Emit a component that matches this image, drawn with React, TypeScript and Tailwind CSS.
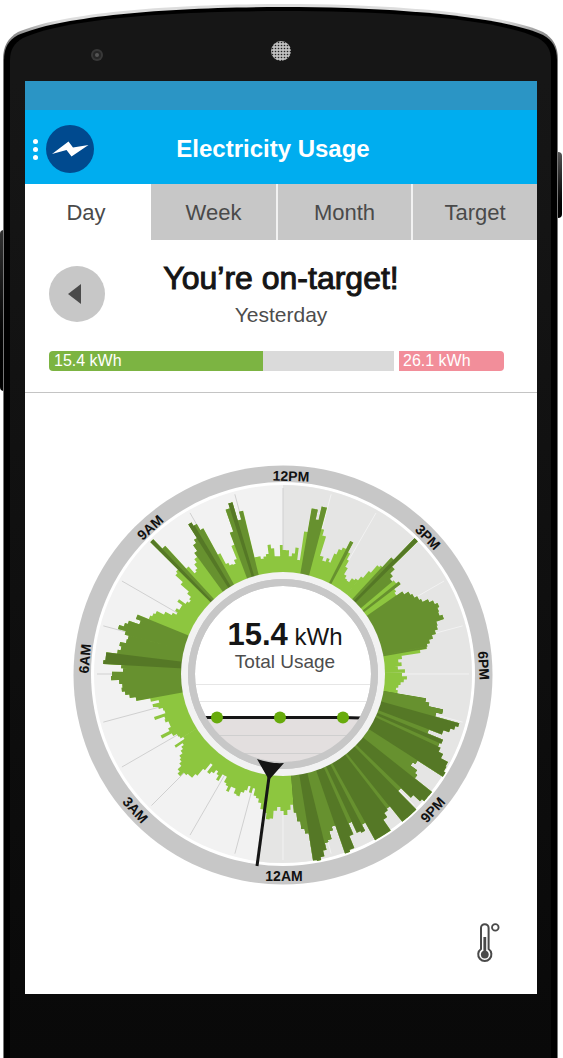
import { useState } from 'react'
import type { ReactNode } from 'react'
import clsx from 'clsx'

const TABS = ['Day', 'Week', 'Month', 'Target']

// [angle, reach] for each reading. Angles run clockwise from noon, in degrees.
const READINGS: [number, number][] = [
  [0.4, 124], [2, 124], [3.5, 118], [5, 121], [6.3, 127], [7.8, 115], [9.1, 144], [10.5, 168], [11.4, 168],
  [12.4, 158], [13.6, 172], [14.5, 172], [15.1, 150], [16.6, 144], [18.1, 124], [20, 120], [21.5, 124], [22.6, 121],
  [23.5, 131], [24.6, 137], [26, 140], [27.5, 149], [28.7, 138], [29.6, 131], [30.7, 124], [32.2, 117], [33.5, 114],
  [35, 113], [36.5, 118], [38, 120], [39.3, 125], [40.3, 134], [41.5, 144], [42.4, 146], [43.4, 159], [44.8, 189],
  [46.1, 153], [47.5, 147], [49, 143], [50.6, 145], [52, 148], [53.2, 140], [54.6, 138], [56, 145], [57.4, 150],
  [59, 152], [60.8, 155], [62.2, 157], [63.2, 163], [64.6, 167], [66, 170], [67.5, 168], [68.8, 167], [70.4, 170],
  [71.8, 162], [73.2, 161], [74.6, 158], [76, 154], [77.4, 150], [78.8, 147], [79.6, 146], [80.5, 139], [82, 120],
  [83.5, 116], [85.2, 119], [87, 115], [88.6, 122], [90.2, 119], [91.8, 124], [93.2, 121], [94.5, 118], [96, 116],
  [97.4, 114], [98.8, 116], [100.4, 145], [101.8, 149], [103.2, 164], [105, 158], [106.2, 183], [107.4, 180],
  [108.6, 176], [110, 170], [111.6, 156], [113, 173], [114.4, 171], [115.8, 174], [117.3, 179], [118.8, 187],
  [120.4, 188], [122, 190], [123.4, 160], [125, 157], [126.3, 165], [127.6, 168], [129.1, 190], [130.3, 190],
  [131.5, 190], [132.4, 187], [133.3, 178], [134.7, 164], [136.2, 190], [138, 190], [140.4, 190], [141.7, 170],
  [143.2, 172], [144.7, 177], [146.2, 190], [148, 190], [150.2, 190], [151.7, 170], [153, 177], [154.4, 175],
  [155.6, 163], [157, 175], [158.4, 188], [160.2, 190], [161.6, 160], [163, 164], [164.2, 172], [165.6, 174],
  [166.6, 181], [167.8, 187], [169, 190], [170.2, 189], [171.4, 161], [172.6, 156], [173.8, 148], [175, 139],
  [176.2, 131], [177.4, 136], [179, 141], [180.4, 137], [181.7, 133], [183.3, 137], [184.6, 145], [186, 146],
  [187.4, 140], [188.8, 137], [190.2, 131], [191.6, 127], [193, 125], [194.2, 118], [195.4, 123], [196.7, 117],
  [197.6, 122], [198.9, 125], [200.4, 130], [201.8, 129], [203, 124], [204.2, 124], [205.3, 130], [206.6, 125],
  [208, 123], [209.2, 117], [210.4, 117], [211.7, 125], [213, 120], [214.2, 117], [215.5, 121], [217, 124],
  [218.4, 115], [219.6, 124], [220.6, 133], [221.8, 138], [223, 138], [224.4, 140], [226, 145], [227.2, 142],
  [228.5, 137], [229.8, 134], [231, 132], [232.4, 128], [233.8, 125], [235, 122], [236, 130], [237.1, 118],
  [238.4, 121], [239.8, 122], [241.2, 126], [242.6, 137], [244, 127], [245.4, 124], [246.8, 124], [248.2, 127],
  [249.6, 126], [250.8, 136], [252.2, 124], [253.6, 125], [255, 129], [256.3, 134], [257.5, 127], [258.8, 135],
  [260.4, 149], [261.8, 155], [263, 159], [264.4, 162], [265.8, 161], [267.2, 164], [268.6, 172], [270, 171],
  [271.4, 160], [272.6, 162], [273.7, 180], [275, 178], [276.3, 178], [277.6, 167], [279, 164], [280.4, 166],
  [281.8, 160], [283.2, 159], [284.6, 163], [286, 171], [287.2, 166], [288.4, 163], [289.6, 152], [291.4, 157],
  [293, 145], [294.4, 143], [295.8, 141], [297.2, 133], [298.4, 126], [299.6, 122], [301, 125], [302.4, 122],
  [303.7, 122], [305, 128], [306.3, 120], [307.8, 118], [309.3, 120], [310.6, 125], [311.8, 136], [313.2, 146],
  [314.2, 148], [315.4, 187], [316.7, 174], [318.1, 143], [319.2, 134], [320.4, 136], [321.6, 141], [323, 145],
  [324.4, 150], [325.8, 157], [327.1, 161], [328.2, 177], [329.4, 173], [330.7, 166], [331.9, 136], [333.1, 124],
  [334.5, 121], [336, 120], [337.4, 124], [338.7, 138], [340, 151], [341.5, 174], [342.9, 179], [344.2, 160],
  [345.5, 168], [347, 120], [348.4, 120], [349.8, 117], [351.2, 119], [352.5, 121], [353.8, 130], [355.2, 126],
  [356.6, 118], [358, 118], [359.2, 129],
]

const LIME = '#8dc63f'
const OLIVE = '#67912f'
const MOSS = '#557826'

// Heavier use is drawn over the lime base, [from, to, colour]
const BANDS: [number, number, string][] = [
  [9.8, 14.8, OLIVE], [26.8, 28.2, OLIVE], [42.8, 49.8, OLIVE], [44, 45.4, MOSS], [51.4, 52.6, OLIVE],
  [55.2, 80, OLIVE], [99.6, 175.4, MOSS], [99.6, 105.6, OLIVE], [110.8, 112.4, OLIVE], [113.8, 115, OLIVE],
  [122.7, 128.4, OLIVE], [134, 135.4, OLIVE], [141.2, 142.4, OLIVE], [151, 152.4, OLIVE], [155, 156.4, OLIVE],
  [161, 166.2, OLIVE], [170.8, 175.4, OLIVE], [259.6, 292.2, OLIVE], [273.2, 277, MOSS], [314.8, 317.4, OLIVE],
  [314.8, 316, MOSS], [323.8, 331.3, OLIVE], [327.6, 329.2, MOSS], [339.4, 346.2, OLIVE], [342.2, 343.6, MOSS],
]

const HOURS = [
  { label: '12PM', at: 2, turn: 2 },
  { label: '3PM', at: 46, turn: 46 },
  { label: '6PM', at: 87, turn: 87 },
  { label: '9PM', at: 132, turn: -48 },
  { label: '12AM', at: 180, turn: 0 },
  { label: '3AM', at: 228, turn: 48 },
  { label: '6AM', at: 275, turn: -85 },
  { label: '9AM', at: 318, turn: -42 },
]

const SPOKES = Array.from({ length: 24 }, (_, i) => i * 15)

function polar(angle: number, r: number) {
  const a = (angle * Math.PI) / 180
  return [+(r * Math.sin(a)).toFixed(2), +(-r * Math.cos(a)).toFixed(2)]
}

function wedge(from: number, to: number, r: number) {
  const large = to - from > 180 ? 1 : 0
  return `M0 0L${polar(from, r)}A${r} ${r} 0 ${large} 1 ${polar(to, r)}Z`
}

// Stepped outline: each reading reaches halfway to its neighbours
function outline() {
  const n = READINGS.length
  return READINGS.map(([angle, r], i) => {
    const prev = i === 0 ? READINGS[n - 1][0] - 360 : READINGS[i - 1][0]
    const next = i === n - 1 ? READINGS[0][0] + 360 : READINGS[i + 1][0]
    return wedge((prev + angle) / 2, (angle + next) / 2 + 0.05, r)
  }).join('')
}

function UsageDial() {
  return (
    <svg
      viewBox="-210 -210 420 422"
      className="w-[420px] max-w-full font-['Liberation_Sans',Arial,sans-serif]"
      role="img"
      aria-label="Electricity usage by hour"
    >
      <defs>
        <clipPath id="usage">
          <path d={outline()} />
        </clipPath>
        <clipPath id="core">
          <circle r="89" />
        </clipPath>
      </defs>

      <circle cy="1" r="209.5" fill="#c7c7c7" />
      <circle r="192" fill="#fff" />
      <circle r="189" fill="#f2f2f2" />
      <path d={wedge(0, 188, 189)} fill="#e5e5e4" />
      {SPOKES.map((angle) => {
        const [x, y] = polar(angle, 186)
        return <line key={angle} x2={x} y2={y} stroke={angle > 0 && angle < 188 ? '#f2f2f2' : '#d0d0d0'} />
      })}

      <g clipPath="url(#usage)">
        <circle r="191" fill={LIME} />
        {BANDS.map(([from, to, fill]) => (
          <path key={`${from}-${to}`} d={wedge(from, to, 192)} fill={fill} />
        ))}
      </g>

      <g transform="translate(1 2)">
        {HOURS.map(({ label, at, turn }) => {
          const [x, y] = polar(at, 200)
          return (
            <text
              key={label}
              transform={`translate(${x} ${y}) rotate(${turn})`}
              y="5"
              textAnchor="middle"
              className="fill-[#111] text-[14px] font-bold"
            >
              {label}
            </text>
          )
        })}
      </g>

      <circle r="102" fill="#f2f2f2" />
      <circle r="95" fill="#c7c7c7" />
      <circle r="88" fill="#fff" />
      <g clipPath="url(#core)">
        <rect x="-90" y="44" width="180" height="50" fill="#e3dfdf" />
        <path d="M-88 10.5H88M-84 27.5H84" stroke="#e6e6e6" />
        <path d="M-68 61.5H68M-50 79.5H50" stroke="#cfcfcf" />
        <path d="M-78 43.5H60L78 44" stroke="#151515" strokeWidth="3" fill="none" />
      </g>
      <circle r="91.5" fill="none" stroke="#c7c7c7" strokeWidth="7" />
      <circle cx="-66" cy="43.5" r="6" fill="#68ab0c" />
      <circle cx="-3" cy="43.5" r="6" fill="#68ab0c" />
      <circle cx="60" cy="43.5" r="6" fill="#68ab0c" />

      <text x="2" y="-29" textAnchor="middle" className="fill-[#151515]">
        <tspan className="text-[31px] font-bold">15.4</tspan>
        <tspan className="text-[24px]"> kWh</tspan>
      </text>
      <text x="2" y="-6" textAnchor="middle" className="fill-[#4d4d4d] text-[19px]">
        Total Usage
      </text>

      <path d="M-14 103L-26 192" stroke="#151515" strokeWidth="3" />
      <path d="M-26 85Q-12 90 1 89L-14 106Z" fill="#151515" />
    </svg>
  )
}

function Thermometer() {
  return (
    <svg width="26" height="42" viewBox="0 0 26 42" fill="none" stroke="#4a4a4a" strokeWidth="2">
      <path d="M5 27V6a3.800 3.800 0 0 1 7.600 0V27a6.600 6.600 0 1 1-7.600 0Z" />
      <circle cx="8.8" cy="32.6" r="3.9" fill="#4a4a4a" stroke="none" />
      <path d="M8.8 15v16" strokeWidth="2.8" />
      <circle cx="19.3" cy="5.4" r="3.3" strokeWidth="1.8" />
    </svg>
  )
}

function Phone({ children }: { children: ReactNode }) {
  return (
    <div className="relative flex min-h-screen flex-col overflow-hidden bg-white pl-[3px] pr-[5px]">
      <div className="absolute left-0 top-[230px] h-[161px] w-[4px] rounded-l-sm bg-linear-to-b from-[#333] to-black" />
      <div className="absolute right-px top-[152px] h-[66px] w-[5px] rounded-r-sm bg-linear-to-b from-[#555] to-black" />

      <div className="relative flex h-[81px] justify-center">
        <svg className="absolute inset-0 size-full" viewBox="0 0 555 81" preserveAspectRatio="none">
          <defs>
            <linearGradient id="rim">
              <stop offset="0" stopColor="#777" />
              <stop offset="0.1" stopColor="#ddd" />
              <stop offset="0.9" stopColor="#ddd" />
              <stop offset="1" stopColor="#777" />
            </linearGradient>
          </defs>
          <path d="M0 81V60C0 46 5 38 15 32C58 13 165 4 278 4S497 13 540 32C550 38 555 46 555 60V81Z" fill="url(#rim)" />
          <path d="M1 81V60C1 47 6 40 15 35C58 16 165 7 278 7S497 16 540 35C549 40 554 47 554 60V81Z" fill="#000" />
          <path d="M7 81V60C7 50 11 43 20 38C60 19 165 11 278 11S495 19 535 38C544 43 548 50 548 60V81Z" fill="#161616" />
          <circle cx="94" cy="55" r="6" fill="#383838" />
          <circle cx="94" cy="55" r="4" fill="#262626" />
          <circle cx="94" cy="55" r="2" fill="#555" />
        </svg>
        <svg className="relative mt-[41px] size-5" viewBox="0 0 20 20">
          <defs>
            <pattern id="mesh" width="3" height="3" patternUnits="userSpaceOnUse">
              <rect width="3" height="3" fill="#bdbdbd" />
              <circle cx="1.5" cy="1.5" r="0.8" fill="#222" />
            </pattern>
          </defs>
          <circle cx="10" cy="10" r="10" fill="url(#mesh)" />
        </svg>
      </div>

      <div className="relative flex-1 border-x border-[#777] bg-black px-[6px]">
        <div className="h-full bg-linear-to-b from-[#161616] to-[#090909] pb-16 pl-[15px] pr-[14px]">{children}</div>
      </div>
    </div>
  )
}

export default function App() {
  const [tab, setTab] = useState('Day')

  return (
    <Phone>
      <div className="bg-white font-['Liberation_Sans',Arial,sans-serif]">
        <div className="h-[29px] bg-[#2b95c5]" />

        <header className="flex h-[74px] items-center bg-[#00adef] pt-1 pl-2 text-white">
          <button aria-label="Menu" className="flex w-[13px] flex-col items-start gap-[3px]">
            <span className="size-[5px] rounded-full bg-white" />
            <span className="size-[5px] rounded-full bg-white" />
            <span className="size-[5px] rounded-full bg-white" />
          </button>
          <svg viewBox="0 0 48 48" className="h-12 w-12">
            <circle cx="24" cy="24" r="24" fill="#004a8f" />
            <path d="M6 29L22.5 16.5L27 22.5L42.5 20L25.500 31.500L20.500 25Z" fill="#fff" />
          </svg>
          <h1 className="flex-1 pr-[85px] text-center text-[24px] leading-8 font-bold">Electricity Usage</h1>
        </header>

        <nav className="grid grid-cols-[126fr_127fr_135fr_124fr]">
          {TABS.map((name, i) => (
            <button
              key={name}
              onClick={() => setTab(name)}
              aria-pressed={tab === name}
              className={clsx(
                'h-14 text-[22px] text-[#4a4a4a]',
                tab === name ? 'bg-white' : 'bg-[#c7c7c7]',
                i > 0 && i < TABS.length - 1 && 'border-r-2 border-[#f2f2f2]',
                name === 'Day' && 'pr-1'
              )}
            >
              {name}
            </button>
          ))}
        </nav>

        <section className="border-b border-[#c4c4c4] px-6 pt-5 pb-[21px]">
          <div className="grid grid-cols-[56px_1fr_56px] items-start">
            <button aria-label="Previous day" className="mt-1.5 grid size-14 place-items-center rounded-full bg-[#c7c7c7]">
              <svg viewBox="0 0 14 20" className="mr-1 h-5 w-[14px]">
                <path d="M0 10L13 0V20Z" fill="#4a4a4a" />
              </svg>
            </button>
            <div className="text-center whitespace-nowrap">
              <h2 className="text-[32px] leading-9 text-[#151515] [-webkit-text-stroke:1px_#151515]">You’re on-target!</h2>
              <p className="text-[21px] leading-[38px] text-[#4d4d4d]">Yesterday</p>
            </div>
          </div>

          <div className="mt-[17px] mr-[9px] grid h-5 grid-cols-[214fr_131fr_5fr_105fr] text-base leading-5 text-white">
            <div className="rounded-l-sm bg-[#7cb442] pl-[5px]">15.4 kWh</div>
            <div className="bg-[#dadada]" />
            <div />
            <div className="rounded-r-sm bg-[#f28e9a] pl-1 whitespace-nowrap">26.1 kWh</div>
          </div>
        </section>

        <section className="flex justify-center pt-[71px] pl-1">
          <UsageDial />
        </section>

        <footer className="flex justify-end pt-9 pr-[35px] pb-[30px]">
          <button aria-label="Temperature">
            <Thermometer />
          </button>
        </footer>
      </div>
    </Phone>
  )
}
